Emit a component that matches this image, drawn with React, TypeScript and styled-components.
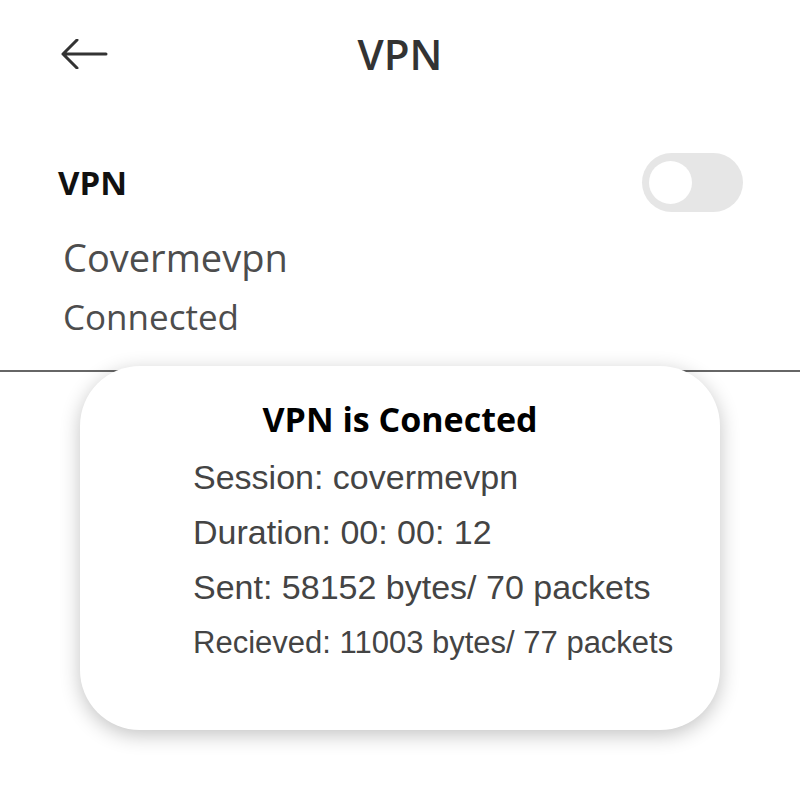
import { FC } from 'react'
import styled, { createGlobalStyle } from 'styled-components'

const GlobalStyle = createGlobalStyle`
  html, body {
    margin: 0;
    padding: 0;
    background: #ffffff;
  }
  body {
    font-family: "Open Sans", "Liberation Sans", sans-serif;
  }
`

const Screen = styled.div`
  width: 800px;
  height: 800px;
  background: #fff;
  overflow: hidden;
`

const Header = styled.header`
  display: grid;
  grid-template-columns: 1fr auto 1fr;
  align-items: center;
  height: 108px;
  padding: 0 60px;
  box-sizing: border-box;
`

const BackButton = styled.button`
  justify-self: start;
  display: flex;
  align-items: center;
  padding: 0;
  border: 0;
  background: none;
  cursor: pointer;
`

const Title = styled.h1`
  margin: 0;
  font-family: "Open Sans", sans-serif;
  font-size: 42px;
  line-height: 50px;
  font-weight: 600;
  color: #333;
`

const SettingRow = styled.div`
  display: flex;
  justify-content: space-between;
  align-items: center;
  height: 59px;
  margin-top: 45px;
  padding: 0 57px 0 58px;
`

const SettingLabel = styled.span`
  font-family: "Open Sans", sans-serif;
  font-size: 33px;
  line-height: 40px;
  font-weight: 700;
  color: #111;
`

const Toggle = styled.div<{ $on?: boolean }>`
  display: flex;
  align-items: center;
  justify-content: ${p => (p.$on ? 'flex-end' : 'flex-start')};
  width: 101px;
  height: 59px;
  padding: 0 7px;
  box-sizing: border-box;
  border-radius: 30px;
  background: ${p => (p.$on ? '#3b82f6' : '#e6e6e6')};
`

const Knob = styled.span`
  width: 43px;
  height: 43px;
  border-radius: 50%;
  background: #fff;
`

const InfoText = styled.div<{ $size: number; $lh: number; $gap: number }>`
  margin-top: ${p => p.$gap}px;
  padding-left: 63px;
  font-family: "Open Sans", sans-serif;
  font-size: ${p => p.$size}px;
  line-height: ${p => p.$lh}px;
  color: #4d4d4d;
`

const Divider = styled.hr`
  margin: 31px 0 0;
  height: 2px;
  border: 0;
  background: #666;
`

const Card = styled.section`
  position: relative;
  margin: -6px 80px 0;
  height: 364px;
  padding: 31px 0 0 113px;
  box-sizing: border-box;
  background: #fff;
  border-radius: 60px;
  box-shadow: 0 5px 20px rgba(0, 0, 0, 0.24);
`

const CardTitle = styled.h2`
  margin: 0 0 9px -113px;
  text-align: center;
  font-family: "Open Sans", sans-serif;
  font-size: 34px;
  line-height: 44px;
  font-weight: 700;
  color: #000;
`

const StatLine = styled.div<{ $small?: boolean }>`
  font-family: "Liberation Sans", Arial, sans-serif;
  font-size: ${p => (p.$small ? 31 : 34)}px;
  line-height: 55px;
  color: #444;
  white-space: nowrap;
`

const ArrowLeft: FC = () => (
  <svg width="48" height="30" viewBox="0 0 48 30" fill="none">
    <path d="M46 15H3M17 1L3 15l14 14" stroke="#333" strokeWidth="3" strokeLinecap="round" strokeLinejoin="round" />
  </svg>
)

const stats = [
  { text: 'Session: covermevpn' },
  { text: 'Duration: 00: 00: 12' },
  { text: 'Sent: 58152 bytes/ 70 packets' },
  { text: 'Recieved: 11003 bytes/ 77 packets', small: true },
]

export default function App() {
  return (
    <>
      <GlobalStyle />
      <Screen>
        <Header>
          <BackButton aria-label="Back">
            <ArrowLeft />
          </BackButton>
          <Title>VPN</Title>
          <span />
        </Header>

        <SettingRow>
          <SettingLabel>VPN</SettingLabel>
          <Toggle>
            <Knob />
          </Toggle>
        </SettingRow>

        <InfoText $size={38} $lh={48} $gap={21}>Covermevpn</InfoText>
        <InfoText $size={35} $lh={44} $gap={14}>Connected</InfoText>

        <Divider />

        <Card>
          <CardTitle>VPN is Conected</CardTitle>
          {stats.map(s => (
            <StatLine key={s.text} $small={s.small}>{s.text}</StatLine>
          ))}
        </Card>
      </Screen>
    </>
  )
}
